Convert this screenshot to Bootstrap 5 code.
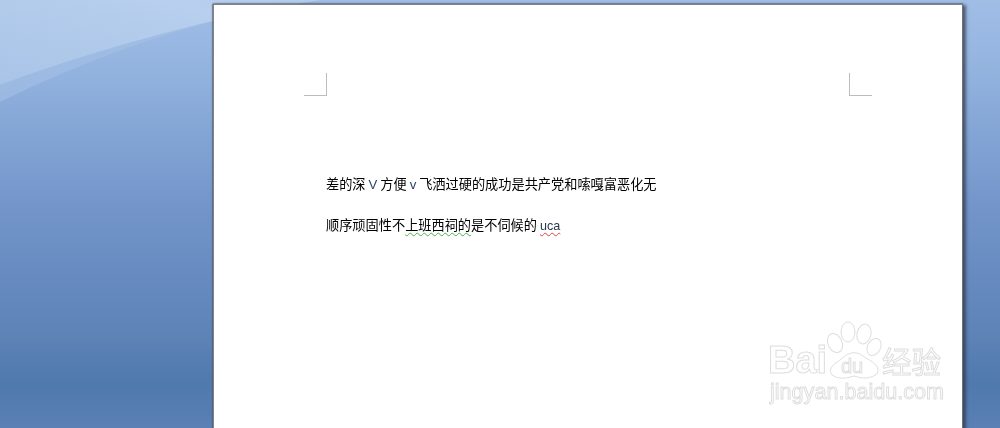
<!DOCTYPE html>
<html lang="zh">
<head>
<meta charset="utf-8">
<title>Word</title>
<link href="https://cdn.jsdelivr.net/npm/bootstrap@5.3.0/dist/css/bootstrap.min.css" rel="stylesheet">
<style>
html,body{height:428px;overflow:hidden}
body{background:linear-gradient(180deg,#a0bde6 0,#93b3df 70px,#84a6d6 130px,#7294c9 210px,#6388bd 300px,#5c82b6 340px,#5079ae 384px,#5a80b5 428px);position:relative;font-family:"Liberation Sans","Noto Sans CJK SC",sans-serif}
.desk-swoosh{position:absolute;left:0;top:0;width:1000px;height:428px}
.sheet{position:relative;width:750px;height:440px;margin:4px 0 0 213px;background:#fff;border-top:1px solid #7f8387;border-left:1px solid #7f8387;border-right:1px solid #6f7377;box-shadow:0 -1px 1px rgba(90,95,105,.5),-1px 0 1px rgba(80,85,95,.55),3px 1px 3px rgba(45,50,65,.7);padding:68px 90px 0 90px}
.crops{height:23px;margin-bottom:78px}
.crop-mark{width:23px;height:23px;border:0 solid #bcbcbc;border-bottom-width:1px}
.crop-l{border-right-width:1px}
.crop-r{border-left-width:1px}
.doc{padding-left:22px;font-family:"Noto Sans CJK SC","Liberation Sans",sans-serif;font-size:13.2px;color:#000;line-height:20px;filter:blur(.3px)}
.doc p{margin:0 0 20px;white-space:nowrap}
.wavy-g{text-decoration:underline wavy #4caf50 1px;text-underline-offset:2px}
.wavy-r{text-decoration:underline wavy #e0453c 1px;text-underline-offset:2px;font-family:"Liberation Sans",sans-serif;font-size:12.6px;color:#27364f}
.latin{font-family:"Liberation Sans",sans-serif;color:#2c4370}
.mark-wm{position:absolute;left:750px;top:310px;width:210px;height:110px;filter:blur(.4px)}
.wm-text{fill:#fff;stroke:#dedede;stroke-width:1px;font-family:"Liberation Sans","Noto Sans CJK SC",sans-serif}
</style>
</head>
<body>
<svg class="desk-swoosh" viewBox="0 0 1000 428" aria-hidden="true">
<defs><linearGradient id="sw" x1="0" y1="1" x2="1" y2="0"><stop offset="0" stop-color="#a8c4e7"/><stop offset=".75" stop-color="#b8cfee"/><stop offset="1" stop-color="#b4ccec"/></linearGradient></defs>
<path d="M0 0H320Q265 8 213 21Q100 48 0 85Z" fill="url(#sw)"/>
<path d="M0 102Q60 72 130 47Q170 33 213 21Q100 48 0 85Z" fill="#a6c1e6" opacity=".55"/>
</svg>
<div class="sheet">
<div class="crops d-flex justify-content-between">
<div class="crop-mark crop-l"></div>
<div class="crop-mark crop-r"></div>
</div>
<div class="doc">
<p>差的深 <span class="latin">V</span> 方便 <span class="latin">v</span> 飞洒过硬的成功是共产党和嗦嘎富恶化无</p>
<p>顺序顽固性不<span class="wavy-g">上班西祠的</span>是不伺候的 <span class="wavy-r">uca</span></p>
</div>
</div>
<svg class="mark-wm" viewBox="0 0 210 110" aria-hidden="true">
<g fill="#fff" stroke="#dedede" stroke-width="1">
<ellipse cx="85" cy="33" rx="7" ry="10" transform="rotate(-25 85 33)"/>
<ellipse cx="98" cy="22" rx="7" ry="10"/>
<ellipse cx="114" cy="24" rx="7" ry="10" transform="rotate(12 114 24)"/>
<ellipse cx="124" cy="37" rx="6.5" ry="9" transform="rotate(28 124 37)"/>
<path d="M90 50Q103 36 116 48Q132 56 127 64Q118 71 104 66Q90 71 82 65Q76 58 90 50Z"/>
</g>
<text class="wm-text" x="18" y="63" font-size="38" font-weight="700">Bai</text>
<text class="wm-text" x="91" y="63" font-size="20">du</text>
<text class="wm-text" x="132" y="63" font-size="29.5">经验</text>
<text class="wm-text" x="20" y="89" font-size="21.6">jingyan.baidu.com</text>
</svg>
</body>
</html>
